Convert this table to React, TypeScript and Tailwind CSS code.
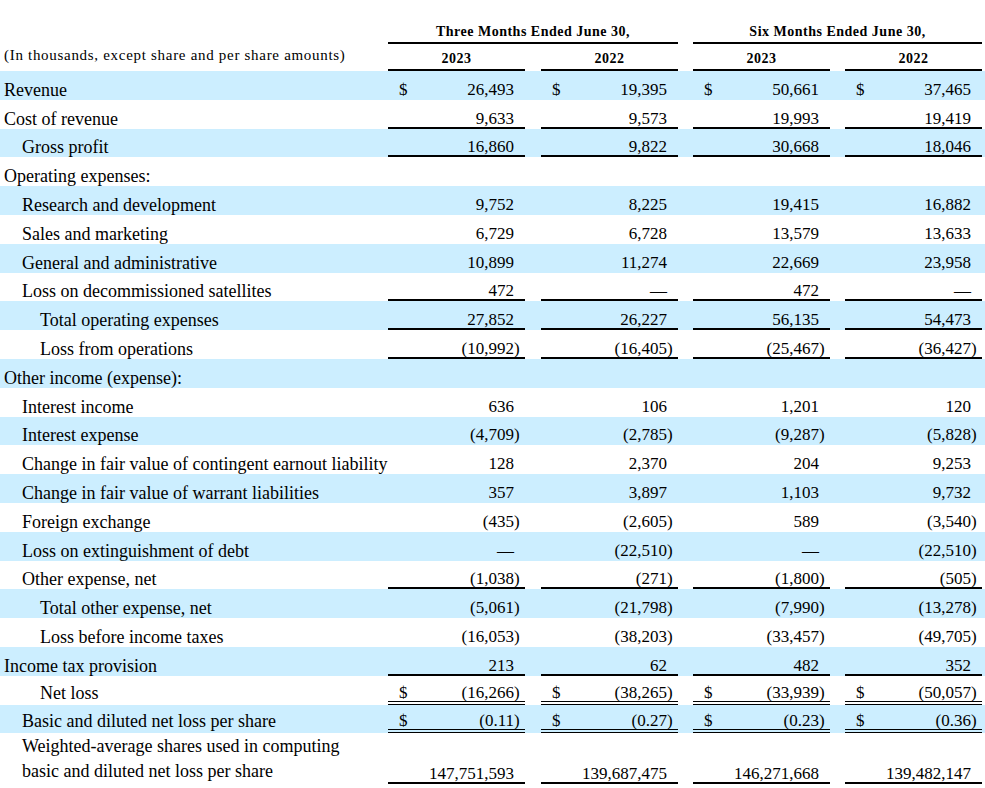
import React from "react";

type Line = "none" | "single" | "double";
type Row = {
  label: string;
  indent: 0 | 1 | 2;
  values: string[] | null;
  dollar?: boolean;
  line?: Line;
};

const GRID = "grid grid-cols-[388px_137px_16px_137px_15px_137px_15px_137px]";

const rows: Row[] = [
  { label: "Revenue", indent: 0, values: ["26,493", "19,395", "50,661", "37,465"], dollar: true },
  { label: "Cost of revenue", indent: 0, values: ["9,633", "9,573", "19,993", "19,419"], line: "single" },
  { label: "Gross profit", indent: 1, values: ["16,860", "9,822", "30,668", "18,046"], line: "single" },
  { label: "Operating expenses:", indent: 0, values: null },
  { label: "Research and development", indent: 1, values: ["9,752", "8,225", "19,415", "16,882"] },
  { label: "Sales and marketing", indent: 1, values: ["6,729", "6,728", "13,579", "13,633"] },
  { label: "General and administrative", indent: 1, values: ["10,899", "11,274", "22,669", "23,958"] },
  { label: "Loss on decommissioned satellites", indent: 1, values: ["472", "—", "472", "—"], line: "single" },
  { label: "Total operating expenses", indent: 2, values: ["27,852", "26,227", "56,135", "54,473"], line: "single" },
  { label: "Loss from operations", indent: 2, values: ["(10,992)", "(16,405)", "(25,467)", "(36,427)"], line: "single" },
  { label: "Other income (expense):", indent: 0, values: null },
  { label: "Interest income", indent: 1, values: ["636", "106", "1,201", "120"] },
  { label: "Interest expense", indent: 1, values: ["(4,709)", "(2,785)", "(9,287)", "(5,828)"] },
  { label: "Change in fair value of contingent earnout liability", indent: 1, values: ["128", "2,370", "204", "9,253"] },
  { label: "Change in fair value of warrant liabilities", indent: 1, values: ["357", "3,897", "1,103", "9,732"] },
  { label: "Foreign exchange", indent: 1, values: ["(435)", "(2,605)", "589", "(3,540)"] },
  { label: "Loss on extinguishment of debt", indent: 1, values: ["—", "(22,510)", "—", "(22,510)"] },
  { label: "Other expense, net", indent: 1, values: ["(1,038)", "(271)", "(1,800)", "(505)"], line: "single" },
  { label: "Total other expense, net", indent: 2, values: ["(5,061)", "(21,798)", "(7,990)", "(13,278)"] },
  { label: "Loss before income taxes", indent: 2, values: ["(16,053)", "(38,203)", "(33,457)", "(49,705)"] },
  { label: "Income tax provision", indent: 0, values: ["213", "62", "482", "352"], line: "single" },
  { label: "Net loss", indent: 2, values: ["(16,266)", "(38,265)", "(33,939)", "(50,057)"], dollar: true, line: "double" },
  { label: "Basic and diluted net loss per share", indent: 1, values: ["(0.11)", "(0.27)", "(0.23)", "(0.36)"], dollar: true, line: "double" },
];

function lineClass(line: Line | undefined) {
  if (line === "single") return "border-b-2 border-black";
  if (line === "double") return "border-b-4 border-double border-black";
  return "border-b-2 border-transparent";
}

function labelLine(line: Line | undefined) {
  if (line === "double") return "border-b-4 border-transparent";
  return "border-b-2 border-transparent";
}

function indentClass(i: number) {
  if (i === 2) return "pl-[40px]";
  if (i === 1) return "pl-[22px]";
  return "pl-[4px]";
}

function ValueCell({ value, dollar, line, col }: { value: string; dollar?: boolean; line?: Line; col: string }) {
  const neg = value.startsWith("(") && value.endsWith(")");
  const main = neg ? value.slice(0, -1) : value;
  return (
    <div className={`${col} flex items-end justify-between pl-[11px] ${lineClass(line)}`}>
      <span className="text-[17px] leading-[16px]">{dollar ? "$" : ""}</span>
      <span className="flex items-end text-[17px] leading-[16px]">
        <span>{main}</span>
        <span className="inline-block w-[11px] text-left">{neg ? ")" : ""}</span>
      </span>
    </div>
  );
}

const COLS = ["col-start-2", "col-start-4", "col-start-6", "col-start-8"];

function BodyRow({ row, shaded }: { row: Row; shaded: boolean }) {
  return (
    <div className={`${GRID} h-[28.8px] ${shaded ? "bg-[#cceeff]" : "bg-white"}`}>
      <div className={`col-start-1 flex items-end ${indentClass(row.indent)} ${labelLine(row.line)}`}>
        <span className="text-[18px] leading-[16px] whitespace-nowrap">{row.label}</span>
      </div>
      {row.values &&
        row.values.map((v, i) => (
          <ValueCell key={i} value={v} dollar={row.dollar} line={row.line} col={COLS[i]} />
        ))}
    </div>
  );
}

export default function App() {
  const shares = ["147,751,593", "139,687,475", "146,271,668", "139,482,147"];
  return (
    <div className="w-[985px] h-[788px] bg-white text-black font-['Liberation_Serif','Times_New_Roman',serif] overflow-hidden">
      {/* Header row 1 */}
      <div className={`${GRID} h-[44px]`}>
        <div className="col-start-2 col-span-3 flex items-end justify-center pb-[2px] border-b-2 border-black">
          <span className="text-[14px] leading-[16px] font-bold tracking-[0.5px] whitespace-nowrap">
            Three Months Ended June 30,
          </span>
        </div>
        <div className="col-start-6 col-span-3 flex items-end justify-center pb-[2px] border-b-2 border-black">
          <span className="text-[14px] leading-[16px] font-bold tracking-[0.5px] whitespace-nowrap">
            Six Months Ended June 30,
          </span>
        </div>
      </div>
      {/* Header row 2 */}
      <div className={`${GRID} h-[27px]`}>
        <div className="col-start-1 flex items-end pl-[4px] pb-[6px] border-b-2 border-transparent">
          <span className="text-[15px] leading-[16px] tracking-[0.7px] whitespace-nowrap">
            (In thousands, except share and per share amounts)
          </span>
        </div>
        {["2023", "2022", "2023", "2022"].map((y, i) => (
          <div
            key={i}
            className={`${COLS[i]} flex items-end justify-center pb-[2px] border-b-2 border-black`}
          >
            <span className="text-[14px] leading-[16px] font-bold tracking-[0.5px]">{y}</span>
          </div>
        ))}
      </div>
      {rows.map((r, i) => (
        <BodyRow key={i} row={r} shaded={i % 2 === 0} />
      ))}
      {/* Weighted average row */}
      <div className={`${GRID} h-[51px] bg-white`}>
        <div className="col-start-1 flex items-end pl-[22px] border-b-2 border-transparent">
          <span className="text-[18px] leading-[25px] whitespace-nowrap mb-[-2px]">
            Weighted-average shares used in computing
            <br />
            basic and diluted net loss per share
          </span>
        </div>
        {shares.map((v, i) => (
          <ValueCell key={i} value={v} line="single" col={COLS[i]} />
        ))}
      </div>
    </div>
  );
}
